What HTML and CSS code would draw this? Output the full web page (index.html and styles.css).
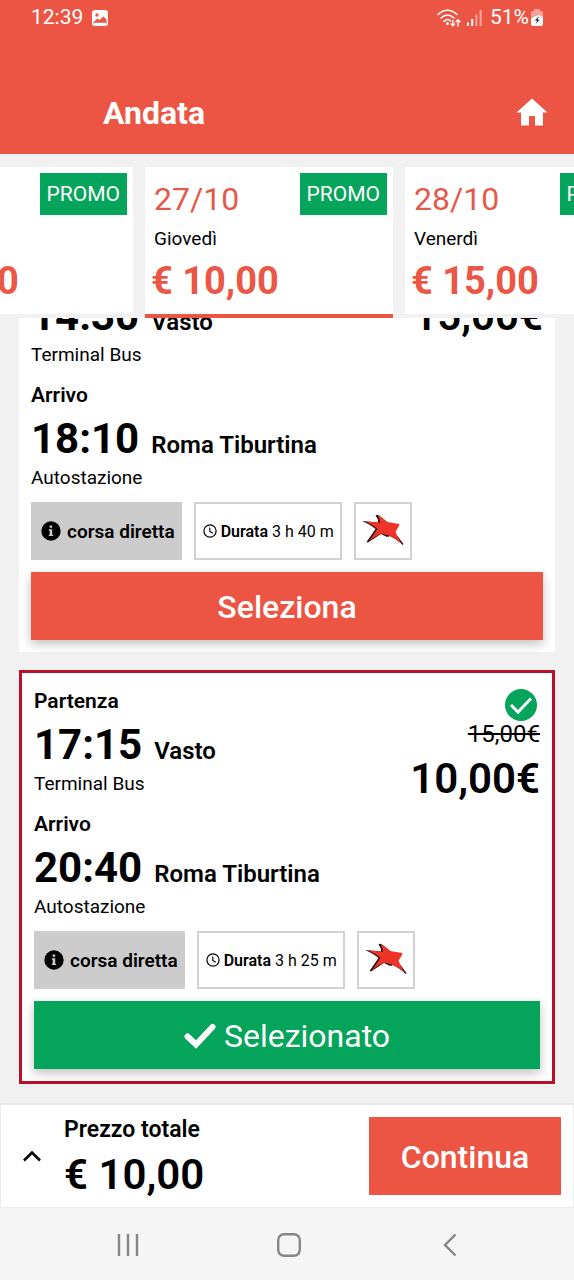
FILE: index.html
```html
<!DOCTYPE html>
<html lang="it">
<head>
  <meta charset="utf-8">
  <meta name="viewport" content="width=device-width, initial-scale=1">
  <title>Andata</title>
  <link rel="stylesheet" href="styles.css">
</head>
<body>
  <!-- Shared icons -->
  <svg class="sprite" aria-hidden="true">
    <symbol id="icon-info" viewBox="0 0 20 20">
      <circle cx="10" cy="10" r="9.7"/>
      <path d="M8.6 4.6h2.6v2.2H8.6zM7.8 8.3h3.4v5.4h1v1.4H7.8v-1.4h.9V9.8h-.9z" fill="#ccc"/>
    </symbol>
    <symbol id="icon-clock" viewBox="0 0 14 14">
      <circle cx="7" cy="7" r="6.1" fill="none" stroke="#000" stroke-width="1.2"/>
      <path d="M6.8 3.4v4l3 1.9" fill="none" stroke="#000" stroke-width="1.1"/>
    </symbol>
    <symbol id="icon-star" viewBox="0 0 42 34">
      <path d="M0 7L16 8.500Q16 4 13.500 1.500Q15 0 17 1.500L30 12 25 23 19 20 6 28.500 4.500 28 13.500 15Q9 11 0 7Z" fill="#2a1715"/>
      <path d="M23 20l3 3 2-1q8 4 12.500 9l1-1-6-8z" fill="#2a1715"/>
      <path d="M3 7.300L18 8.800Q18 5 16 1.800Q20 3 25 8L37.500 10 36.500 13 33.500 17.500 35.500 22.500 39.500 29.500Q33 24 27 21.500L20 19.800Q13 22 7 27.500L15.500 14.800Q10 10.500 3 7.300Z" fill="#ee3328"/>
    </symbol>
  </svg>

  <header class="header">
    <div class="status-bar">
      <span>12:39</span>
      <svg width="16" height="16" viewBox="0 0 16 16">
        <rect width="16" height="16" rx="3" fill="#fff"/>
        <circle cx="5" cy="5" r="1.700" fill="#ec5543"/>
        <path d="M1.500 12l4-3.500 2 1.500 4-3.500 3 3v4.500h-13z" fill="#ec5543"/>
        <path d="M2 13.500h12" stroke="#fff" stroke-width="1.500"/>
      </svg>
      <div class="status-right">
        <svg width="24" height="18" viewBox="0 0 24 18" fill="none" stroke="#fff" stroke-width="1.600" stroke-linecap="round">
          <path d="M1 5.500Q10.500-3 20 5.500M4 9Q10.500 3 17 9M7 12.300Q10.500 9 13.500 11.800"/>
          <circle cx="10.500" cy="14.500" r=".7" fill="#fff"/>
          <path d="M15.800 11.500v5M14 15l1.800 1.800L17.500 15M21 17v-6M19 12.800l2-2 2 2" stroke-width="1.400"/>
        </svg>
        <svg width="15" height="16" viewBox="0 0 15 16" fill="#fff">
          <path d="M0 12.500h2V16H0zM4.200 9h2v7h-2z"/>
          <path d="M8.400 4.500h2V16h-2zM12.600 0h2v16h-2z" opacity=".5"/>
        </svg>
        <span>51%</span>
        <svg class="battery" width="12" height="17" viewBox="0 0 12 17">
          <path d="M3 2V0h6v2h1q2 0 2 2v4H0V4q0-2 2-2z" fill="#fff" opacity=".45"/>
          <path d="M0 9l5-2 3-1 4 2v7q0 2-2 2H2q-2 0-2-2z" fill="#fff"/>
          <path d="M8 7L4 11.500l2.200.3L4.500 15 8.500 11 6.500 10.500z" fill="#222"/>
        </svg>
      </div>
    </div>
    <div class="title-bar">
      <h1>Andata</h1>
      <a href="#" class="home-link" aria-label="Home">
        <svg width="32" height="28" viewBox="0 0 32 28">
          <path d="M16 .5L31.500 14.500H27V27.500h-8V18h-6v9.500H5v-13H.5z" fill="#fff"/>
        </svg>
      </a>
    </div>
  </header>

  <nav class="dates">
    <div class="dates-track">
      <button class="date-card">
        <span class="date">26/10</span>
        <span class="day">Mercoledì</span>
        <span class="date-price">€ 10,00</span>
        <span class="promo">PROMO</span>
      </button>
      <button class="date-card selected">
        <span class="date">27/10</span>
        <span class="day">Giovedì</span>
        <span class="date-price">€ 10,00</span>
        <span class="promo">PROMO</span>
      </button>
      <button class="date-card">
        <span class="date">28/10</span>
        <span class="day">Venerdì</span>
        <span class="date-price">€ 15,00</span>
        <span class="promo">PROMO</span>
      </button>
    </div>
  </nav>

  <main class="results">
    <article class="trip">
      <div class="trip-info">
        <div class="legs">
          <div class="leg">
            <div class="leg-label">Partenza</div>
            <div class="leg-stop"><span class="time">14:30</span><span class="city">Vasto</span></div>
            <div class="station">Terminal Bus</div>
          </div>
          <div class="leg">
            <div class="leg-label">Arrivo</div>
            <div class="leg-stop"><span class="time">18:10</span><span class="city">Roma Tiburtina</span></div>
            <div class="station">Autostazione</div>
          </div>
        </div>
        <div class="fare">
          <span class="price">15,00€</span>
        </div>
      </div>
      <div class="tags">
        <span class="tag direct"><svg width="20" height="20"><use href="#icon-info"/></svg>corsa diretta</span>
        <span class="tag duration"><svg width="14" height="14"><use href="#icon-clock"/></svg><span><b>Durata</b> 3 h 40 m</span></span>
        <span class="tag carrier"><svg width="42" height="34"><use href="#icon-star"/></svg></span>
      </div>
      <button class="btn select-btn">Seleziona</button>
    </article>

    <article class="trip active">
      <div class="trip-info">
        <div class="legs">
          <div class="leg">
            <div class="leg-label">Partenza</div>
            <div class="leg-stop"><span class="time">17:15</span><span class="city">Vasto</span></div>
            <div class="station">Terminal Bus</div>
          </div>
          <div class="leg">
            <div class="leg-label">Arrivo</div>
            <div class="leg-stop"><span class="time">20:40</span><span class="city">Roma Tiburtina</span></div>
            <div class="station">Autostazione</div>
          </div>
        </div>
        <div class="fare">
          <svg class="fare-check" width="32" height="32" viewBox="0 0 32 32">
            <circle cx="16" cy="16" r="16" fill="#04a45a"/>
            <path d="M6 16l7 7L26 9.500" fill="none" stroke="#fff" stroke-width="3"/>
          </svg>
          <del class="old-price">15,00€</del>
          <span class="price">10,00€</span>
        </div>
      </div>
      <div class="tags">
        <span class="tag direct"><svg width="20" height="20"><use href="#icon-info"/></svg>corsa diretta</span>
        <span class="tag duration"><svg width="14" height="14"><use href="#icon-clock"/></svg><span><b>Durata</b> 3 h 25 m</span></span>
        <span class="tag carrier"><svg width="42" height="34"><use href="#icon-star"/></svg></span>
      </div>
      <button class="btn selected-btn">
        <svg width="32" height="26" viewBox="0 0 32 26">
          <path d="M3.500 13.500l8.500 8L28.500 4" fill="none" stroke="#fff" stroke-width="6" stroke-linecap="round"/>
        </svg>
        Selezionato
      </button>
    </article>
  </main>

  <footer class="total-bar">
    <button class="expand" aria-label="Dettagli">
      <svg width="18" height="12" viewBox="0 0 18 12">
        <path d="M1 10.500l8-8 8 8" fill="none" stroke="#000" stroke-width="2.600"/>
      </svg>
    </button>
    <div class="total">
      <div class="total-label">Prezzo totale</div>
      <div class="total-price">€ 10,00</div>
    </div>
    <button class="continue-btn">Continua</button>
  </footer>

  <!-- Android navigation keys -->
  <div class="system-nav">
    <button aria-label="Recenti">
      <svg width="24" height="24" viewBox="0 0 24 24" stroke="#858585" stroke-width="2.400">
        <path d="M3 1v22M12 1v22M21 1v22"/>
      </svg>
    </button>
    <button aria-label="Home">
      <svg width="24" height="24" viewBox="0 0 24 24">
        <rect x="1.200" y="1.200" width="21.600" height="21.600" rx="6" fill="none" stroke="#858585" stroke-width="2.400"/>
      </svg>
    </button>
    <button aria-label="Indietro">
      <svg width="24" height="24" viewBox="0 0 24 24">
        <path d="M17.500 1.500L7 12l10.500 10.500" fill="none" stroke="#858585" stroke-width="2.400"/>
      </svg>
    </button>
  </div>
</body>
</html>
```
FILE: styles.css
```css
* {
  box-sizing: border-box;
}
body {
  margin: 0;
  height: 100vh;
  display: flex;
  flex-direction: column;
  overflow: hidden;
  background: #f1f1f2;
  color: #000;
  font-family: Roboto, "Liberation Sans", sans-serif;
}
button {
  padding: 0;
  border: none;
  border-radius: 0;
  background: none;
  color: inherit;
  font-family: inherit;
  cursor: pointer;
}
svg {
  display: block;
  flex: none;
}
.sprite {
  position: absolute;
  width: 0;
  height: 0;
}

/* Header */
.header {
  background: #ec5543;
  color: #fff;
}
.status-bar {
  display: flex;
  align-items: center;
  gap: 9px;
  height: 35px;
  padding: 0 31px;
  font-size: 21px;
  line-height: 35px;
}
.status-right {
  display: flex;
  align-items: center;
  gap: 6px;
  margin-left: auto;
}
.status-right span {
  margin-left: 2px;
}
.battery {
  margin-left: -4px;
}
.title-bar {
  display: flex;
  align-items: center;
  justify-content: space-between;
  padding: 58px 26px 21px 103px;
}
.title-bar h1 {
  margin: 0;
  font-size: 32px;
  line-height: 40px;
  font-weight: 700;
}
.home-link {
  padding-bottom: 2px;
}

/* Date picker strip */
.dates {
  flex: none;
  overflow: hidden;
}
.dates-track {
  display: flex;
  gap: 12px;
  margin-left: -115px;
  padding-top: 13px;
}
.date-card {
  position: relative;
  flex: none;
  display: flex;
  flex-direction: column;
  width: 248px;
  padding: 12px 6px 11px;
  background: #fff;
  background-clip: padding-box;
  border-bottom: 4px solid transparent;
  text-align: left;
}
.date-card.selected {
  border-bottom-color: #ec5543;
}
.date,
.day {
  padding-left: 3px;
  line-height: 40px;
}
.date {
  font-size: 32px;
  color: #e35a4c;
}
.day {
  font-size: 19px;
}
.date-price {
  font-size: 38px;
  line-height: 44px;
  font-weight: 700;
  color: #ea5746;
}
.promo {
  position: absolute;
  top: 6px;
  right: 6px;
  padding: 0 7px;
  background: #04a45a;
  color: #fff;
  font-size: 21px;
  line-height: 42px;
}

.results {
  flex: 1;
  min-height: 0;
  display: flex;
  flex-direction: column;
  justify-content: flex-end;
  gap: 18px;
  padding: 0 19px 19px;
  overflow: hidden;
}
.trip {
  flex: none;
  padding: 12px;
  background: #fff;
}
.trip.active {
  border: 3px solid #b9102a;
}
.trip-info {
  display: flex;
  justify-content: space-between;
}
.leg {
  margin-bottom: 13px;
}
.leg-label {
  font-size: 21px;
  line-height: 32px;
  font-weight: 600;
}
.leg-stop {
  display: flex;
  align-items: baseline;
  gap: 12px;
}
.time {
  font-size: 42px;
  line-height: 56px;
  font-weight: 700;
}
.city {
  font-size: 24px;
  line-height: 32px;
  font-weight: 600;
}
.station {
  font-size: 19px;
  line-height: 22px;
}
.fare {
  display: flex;
  flex-direction: column;
  align-items: flex-end;
  padding-top: 2px;
}
.fare-check {
  margin: 2px 3px 0 0;
}
.old-price {
  font-size: 24px;
  line-height: 26px;
}
.price {
  font-size: 42px;
  line-height: 64px;
  font-weight: 600;
}
.price:first-child {
  margin-top: 26px;
}
.tags {
  display: flex;
  gap: 12px;
  margin-bottom: 12px;
}
.tag {
  display: flex;
  align-items: center;
  height: 58px;
  padding: 0 6px 0 7px;
  border: 2px solid #d2d2d2;
  font-size: 16px;
}
.tag.direct {
  gap: 6px;
  padding: 0 5px 0 8px;
  background: #ccc;
  border-color: #ccc;
  font-size: 19px;
  font-weight: 600;
}
.tag.duration {
  gap: 4px;
}
.tag.carrier {
  justify-content: center;
  width: 58px;
  padding: 0;
}
.tag b {
  font-weight: 600;
}
.btn {
  display: flex;
  align-items: center;
  justify-content: center;
  gap: 8px;
  width: 100%;
  height: 68px;
  padding-top: 2px;
  color: #fff;
  font-size: 32px;
  box-shadow: 0 4px 10px rgba(0, 0, 0, 0.25);
}
.select-btn {
  background: #ec5543;
  font-weight: 500;
}
.selected-btn {
  background: #04a45a;
}

/* Total and continue */
.total-bar {
  flex: none;
  display: flex;
  align-items: center;
  padding: 4px 12px 4px 22px;
  background: #fff;
  border: 1px solid #ececec;
  border-top: 2px solid #e8e8e8;
}
.expand {
  padding: 6px 0;
}
.total {
  margin-left: 23px;
  padding-top: 4px;
}
.total-label {
  font-size: 23px;
  line-height: 34px;
  font-weight: 600;
}
.total-price {
  font-size: 42px;
  line-height: 56px;
  font-weight: 600;
}
.continue-btn {
  width: 192px;
  height: 78px;
  padding-top: 2px;
  margin-left: auto;
  background: #ec5543;
  color: #fff;
  font-size: 32px;
  font-weight: 500;
}

.system-nav {
  flex: none;
  display: flex;
  align-items: center;
  justify-content: space-around;
  height: 72px;
  padding: 2px 44px 0 48px;
  background: #f5f5f5;
}
```
